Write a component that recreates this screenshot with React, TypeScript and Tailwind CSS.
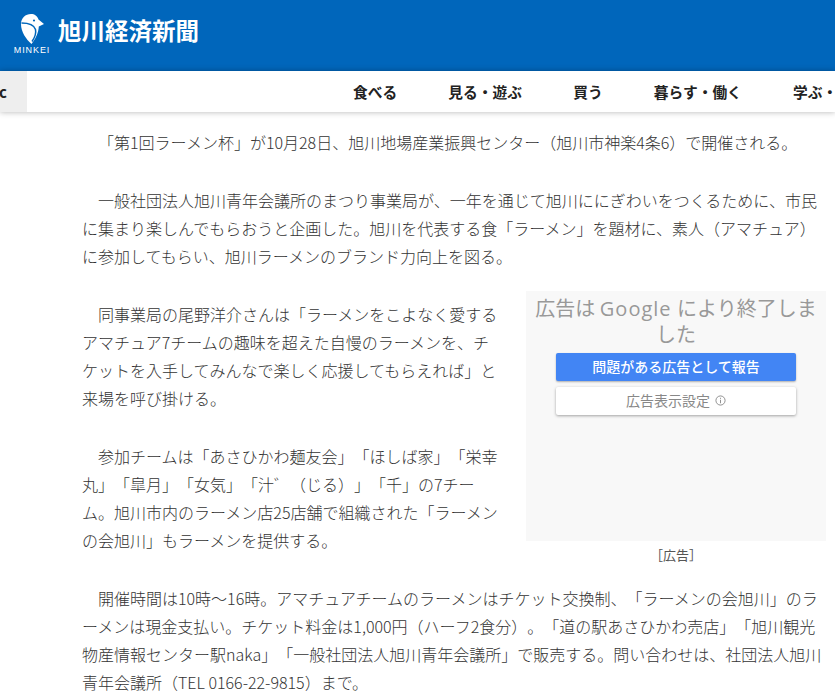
const NAV_ITEMS = ["食べる", "見る・遊ぶ", "買う", "暮らす・働く", "学ぶ・知る"];

function Logo() {
  return (
    <div className="flex w-[34px] flex-col items-center">
      <svg viewBox="0 0 23 30" className="h-[30px] w-[23px]">
        <path
          fill="#fff"
          d="M10 0C13.500 0 16.500 2 17.500 5.500L23 10L17.800 12.500C17.500 19 14.500 25 10.500 30C5 25 0 18 0 10C0 4 4.500 0 10 0Z"
        />
        <path fill="none" stroke="#0066bb" strokeWidth="1.500" d="M0.500 9C7 9 13 11 14.500 15.500C15.500 20 13.500 24 11 27.500" />
        <circle cx="13" cy="6.500" r="1.100" fill="#0066bb" />
      </svg>
      <span className="mt-[1px] text-[9px] leading-[10px] tracking-[0.9px] text-white font-['Liberation_Sans',sans-serif]">
        MINKEI
      </span>
    </div>
  );
}

export default function App() {
  return (
    <div className="h-[699px] w-[835px] overflow-hidden bg-white text-[16px] leading-[28px] text-[#333] [text-spacing-trim:space-all] font-['Noto_Sans_CJK_JP',sans-serif]">
      {/* Header */}
      <header className="flex h-[71px] items-start bg-[#0066bb] pl-[15px] pt-[14px]">
        <Logo />
        <h1 className="ml-[9px] mt-[1px] text-[23.5px] font-bold leading-[30px] text-white">旭川経済新聞</h1>
      </header>

      {/* Nav */}
      <nav className="relative flex h-[41px] items-center overflow-hidden bg-white shadow-[0_0_6px_rgba(0,0,0,0.3)]">
        <div className="flex h-full w-[27px] shrink-0 items-center justify-end overflow-hidden bg-[#eeeeee] pr-[20px] text-[15px] font-bold text-[#222]">
          c
        </div>
        <ul className="ml-[326px] flex shrink-0 gap-[51.2px] text-[14.72px] font-bold text-[#222]">
          {NAV_ITEMS.map((item) => (
            <li key={item} className="shrink-0 whitespace-nowrap">
              {item}
            </li>
          ))}
        </ul>
      </nav>

      {/* Article */}
      <main className="ml-[82px] w-[744px] pt-[16px] font-light">
        <p className="mb-[30px] indent-[16px]">「第1回ラーメン杯」が10月28日、旭川地場産業振興センター（旭川市神楽4条6）で開催される。</p>
        <p className="mb-[30px] indent-[16px]">
          一般社団法人旭川青年会議所のまつり事業局が、一年を通じて旭川ににぎわいをつくるために、市民に集まり楽しんでもらおうと企画した。旭川を代表する食「ラーメン」を題材に、素人（アマチュア）に参加してもらい、旭川ラーメンのブランド力向上を図る。
        </p>

        <aside className="float-right ml-[28px] mt-[-9px] w-[300px] font-normal">
          <div className="flex h-[250px] flex-col items-center bg-[#f8f8f8] pt-[4px]">
            <p className="w-[290px] text-center text-[20px] leading-[25px] text-[#999]">
              広告は <span className="mr-[1px] tracking-[1px] font-['Open_Sans',sans-serif]">Google</span> により終了しました
            </p>
            <button className="mt-[7px] h-[28px] w-[240px] rounded-[2px] bg-[#4285f4] pb-[2px] text-[14px] leading-[26px] font-medium text-white shadow-[0_1px_2px_rgba(0,0,0,0.3)]">
              問題がある広告として報告
            </button>
            <button className="mt-[6px] flex h-[28px] w-[240px] items-center justify-center gap-[5px] rounded-[2px] bg-white pb-[2px] text-[14px] text-[#888] shadow-[0_1px_3px_rgba(0,0,0,0.35)]">
              広告表示設定
              <svg viewBox="0 0 12 12" className="h-[11px] w-[11px]" fill="none" stroke="#888" strokeWidth="1">
                <circle cx="6" cy="6" r="5" />
                <path d="M6 5.200V9M6 3V4.200" />
              </svg>
            </button>
          </div>
          <p className="mt-[1px] text-center text-[13px] leading-[26px] text-[#555]">［広告］</p>
        </aside>

        <p className="mb-[30px] indent-[16px]">
          同事業局の尾野洋介さんは「ラーメンをこよなく愛するアマチュア7チームの趣味を超えた自慢のラーメンを、チケットを入手してみんなで楽しく応援してもらえれば」と来場を呼び掛ける。
        </p>
        <p className="mb-[30px] indent-[16px]">
          参加チームは「あさひかわ麺友会」「ほしば家」「栄幸丸」「皐月」「女気」「汁゛（じる）」「千」の7チーム。旭川市内のラーメン店25店舗で組織された「ラーメンの会旭川」もラーメンを提供する。
        </p>
        <p className="indent-[16px]">
          開催時間は10時～16時。アマチュアチームのラーメンはチケット交換制、「ラーメンの会旭川」のラーメンは現金支払い。チケット料金は1,000円（ハーフ2食分）。「道の駅あさひかわ売店」「旭川観光物産情報センター駅naka」「一般社団法人旭川青年会議所」で販売する。問い合わせは、社団法人旭川青年会議所（TEL 0166-22-9815）まで。
        </p>
      </main>
    </div>
  );
}
